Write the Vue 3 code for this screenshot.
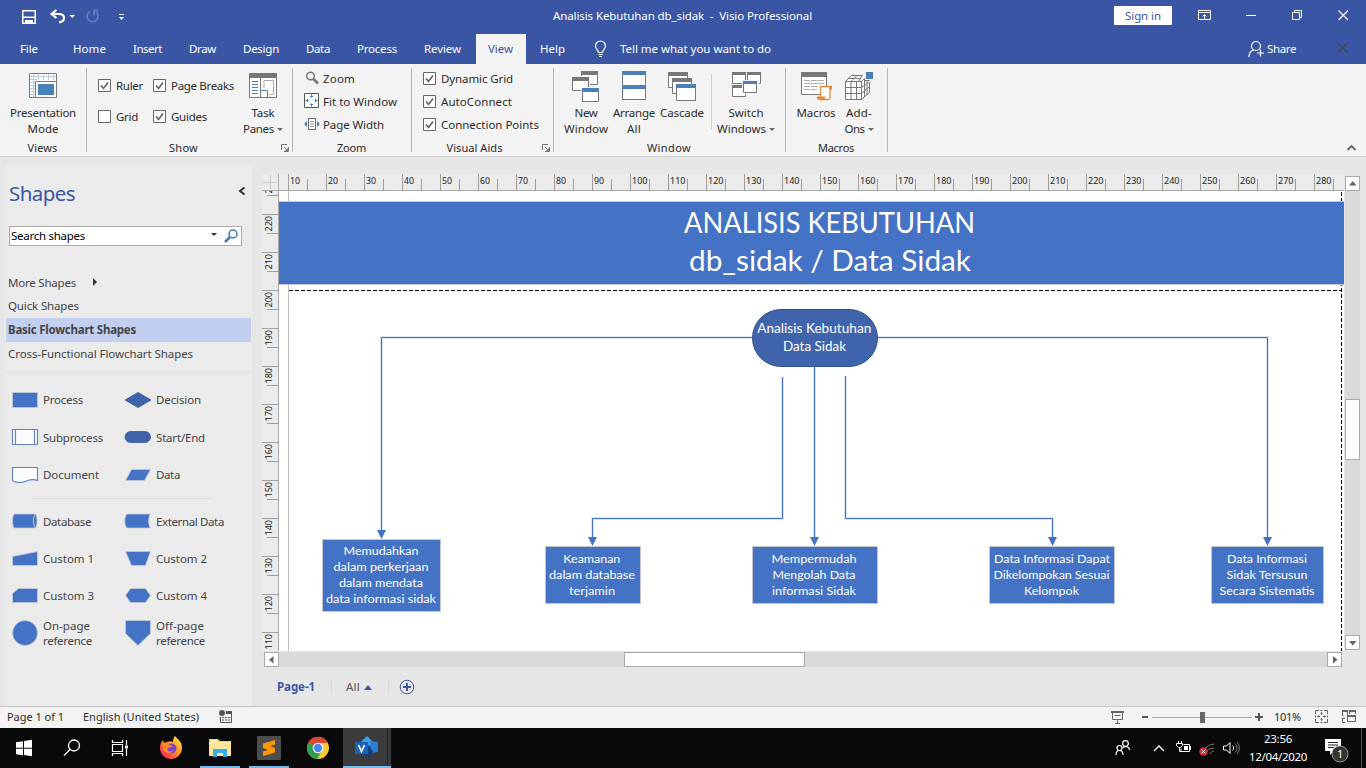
<script setup>
// Sets the tracking of a label so that its text spans the given width in pixels.
const vFit = {
  mounted(el, { value }) {
    const natural = el.getBoundingClientRect().width
    const count = el.textContent.length
    el.style.letterSpacing = ((value - natural) / count).toFixed(3) + 'px'
  }
}

const tabs = [
  ['File', 18], ['Home', 33], ['Insert', 29], ['Draw', 27], ['Design', 36],
  ['Data', 24], ['Process', 40], ['Review', 37], ['View', 25], ['Help', 25]
]

const showChecks = [
  ['Ruler', 27, true], ['Page Breaks', 63, true], ['Grid', 22, false], ['Guides', 36, true]
]
const aidChecks = [['Dynamic Grid', 72], ['AutoConnect', 71], ['Connection Points', 98]]

const stencilTop = [
  ['process', 'Process', 40], ['decision', 'Decision', 45],
  ['subprocess', 'Subprocess', 60], ['startend', 'Start/End', 49],
  ['document', 'Document', 56], ['data', 'Data', 24]
]
const stencilBottom = [
  ['database', 'Database', 48], ['external', 'External Data', 68],
  ['custom1', 'Custom 1', 51], ['custom2', 'Custom 2', 51],
  ['custom3', 'Custom 3', 51], ['custom4', 'Custom 4', 51]
]

const hTicks = Array.from({ length: 28 }, (_, i) => ({ x: 26 + i * 38, n: 10 + i * 10 }))
const vTicks = Array.from({ length: 13 }, (_, i) => ({ y: -15 + i * 38, n: 230 - i * 10 }))

const nodes = [
  { x: 43, y: 348, w: 118, h: 72, lines: [['Memudahkan', 75, 102], ['dalam perkerjaan', 95, 102], ['dalam mendata', 84, 102], ['data informasi sidak', 110, 102]] },
  { x: 266, y: 355, w: 95, h: 57, lines: [['Keamanan', 57, 312.8], ['dalam database', 86, 313], ['terjamin', 46, 313]] },
  { x: 473, y: 355, w: 125, h: 57, lines: [['Mempermudah', 85, 535], ['Mengolah Data', 83, 535], ['informasi Sidak', 84, 535]] },
  { x: 710, y: 355, w: 125, h: 57, lines: [['Data Informasi Dapat', 116, 773], ['Dikelompokan Sesuai', 116, 772.5], ['Kelompok', 55, 772.5]] },
  { x: 932, y: 355, w: 112, h: 57, lines: [['Data Informasi', 80, 988], ['Sidak Tersusun', 81, 988], ['Secara Sistematis', 95, 988]] }
]
const links = [
  'M473 146.5H102.5V340', 'M599 146.5H988.5V347', 'M535.5 176V347',
  'M503.5 186V327.5H313.5V347', 'M566.5 185V327.5H773.5V347'
]
const heads = [[102.5, 348], [988.5, 355], [535.5, 355], [313.5, 355], [773.5, 355]]
</script>

<template>
  <div class="app">
    <header class="titlebar">
      <svg class="quick" viewBox="0 0 170 32">
        <path d="M22 10h14v14H22zM23.500 11.500v5h11v-5zM23.500 18v4.500H25V20h8v2.500h1.500V18z" fill="#fff" fill-rule="evenodd" />
        <path d="M28 21h2.500v3H28z" fill="#fff" />
        <path d="M56.500 10l-5 4 5 4M52 14h6.500c3.500 0 5.500 1.500 5.500 4s-2 4-5 4.300" fill="none" stroke="#fff" stroke-width="2.200" />
        <path d="M69.500 15h5.500l-2.750 3z" fill="#fff" />
        <path d="M90 11.300a5.500 5.500 0 1 0 6.500 1M93 10.500h5.500M94 10.500v5" fill="none" stroke="#657bbb" stroke-width="1.800" />
        <path d="M119 14h5v1h-5zM119 17h5l-2.500 3z" fill="#fff" />
      </svg>
      <div class="doc-title"><span v-fit="259">Analisis Kebutuhan db_sidak&nbsp; -&nbsp; Visio Professional</span></div>
      <div class="signin"><span v-fit="36">Sign in</span></div>
      <svg class="winctl" viewBox="0 0 194 32" fill="none" stroke="#fff">
        <path d="M26.500 10.500h12v9h-12zM26.500 12.500h12M32.500 19v-4.500M30.500 16.500l2-2 2 2" />
        <path d="M74 15.500h10" />
        <path d="M120.500 12.500h7v7h-7zM122.500 12v-1.500h7v7H128" />
        <path d="M166.500 10.500l9.500 9.500M176 10.500l-9.500 9.500" stroke-width="1.100" />
      </svg>
    </header>

    <nav class="tabs">
      <div v-for="t in tabs" :key="t[0]" :class="['tab', { active: t[0] === 'View' }]"><span v-fit="t[1]">{{ t[0] }}</span></div>
      <svg class="bulb" viewBox="0 0 14 18" fill="none" stroke="#fff" stroke-width="1.200">
        <path d="M4.500 12.500c0-2.500-3-3.500-3-6.500a5 5 0 0 1 10 0c0 3-3 4-3 6.500zM4.500 14.500h4M5 16.500h3" />
      </svg>
      <span v-fit="151" class="tell">Tell me what you want to do</span>
      <div class="share">
        <svg viewBox="0 0 17 18" fill="none" stroke="#fff" stroke-width="1.200">
          <circle cx="8" cy="6" r="4.500" /><path d="M1 17c0-4 2-6.500 5-7M9 13h7M12.500 9.500v7" />
        </svg>
        <span v-fit="29">Share</span>
      </div>
      <svg class="docx" viewBox="0 0 12 12"><path d="M1 1l9.500 9.500M10.500 1L1 10.500" stroke="#444" stroke-width="1.200" /></svg>
    </nav>

    <section class="ribbon">
      <div class="group views">
        <div class="gbody">
          <div class="big">
            <svg viewBox="0 0 34 34"><path d="M3.500 5.500h27v24h-27z" fill="#fff" stroke="#7a7a7a" /><path d="M4 8.500h26M4 11.500h7M4 14.500h6M4 17.500h6M4 20.500h6M4 23.500h6M4 26.500h6M7.500 6v23M12.500 6v6M17.500 6v6M22.500 6v6M27.500 6v6" stroke="#b9cde3" /><path d="M9.500 13.500h21v16h-21z" fill="#fff" stroke="#7a7a7a" /><path d="M12 16h16v11H12z" fill="#4a80b8" /></svg>
            <span v-fit="66">Presentation</span><span v-fit="31">Mode</span>
          </div>
        </div>
        <div class="glabel"><span v-fit="30">Views</span></div>
      </div>
      <div class="group show">
        <div class="gbody">
          <div class="checks2">
            <label v-for="c in showChecks" :key="c[0]" class="check">
              <svg viewBox="0 0 13 13"><path d="M.5.5h12v12H.5z" fill="#fff" stroke="#666" /><path v-if="c[2]" d="M3 6.500l2.500 3L10 3.500" fill="none" stroke="#666" stroke-width="1.700" /></svg>
              <span v-fit="c[1]">{{ c[0] }}</span>
            </label>
          </div>
          <div class="big panes">
            <svg viewBox="0 0 34 34"><path d="M3.500 5.500h27v24h-27z" fill="#fff" stroke="#7a7a7a" /><path d="M3 5h28v5H3z" fill="#777" /><path d="M14.500 10v19" stroke="#7a7a7a" /><path d="M6 13.500h6M6 16.500h6M6 19.500h6M6 22.500h6M6 25.500h6" stroke="#4a80b8" /><path d="M18 20v-7.500h9.500v14H23" fill="none" stroke="#aaa" /><path d="M15 22.500h6.500V29" fill="none" stroke="#4a80b8" /></svg>
            <span v-fit="23">Task</span><div class="drop"><span v-fit="31">Panes</span><i></i></div>
          </div>
        </div>
        <div class="glabel"><span v-fit="29">Show</span></div>
        <svg class="launch" viewBox="0 0 8 8"><path d="M.5 6V.5H6M7.500 3v4.500H3M3 3l3 3" fill="none" stroke="#777" /><path d="M7 4v3H4z" fill="#777" /></svg>
      </div>
      <div class="group zoomg">
        <div class="gbody rows">
          <div class="row"><svg viewBox="0 0 16 16"><circle cx="6.500" cy="6" r="3.800" fill="none" stroke="#777" stroke-width="1.500" /><path d="M9.500 9l4.500 4.500" stroke="#777" stroke-width="2.500" /></svg><span v-fit="32">Zoom</span></div>
          <div class="row"><svg viewBox="0 0 16 16"><path d="M.5.5h14v14H.5z" fill="#fff" stroke="#555" /><path d="M7.500 1.500v3M7.500 10.500v3M1.500 7.500h3M10.500 7.500h3M6 3.500h3M6 11.500h3M3.500 6v3M11.500 6v3" stroke="#4a80b8" /></svg><span v-fit="74">Fit to Window</span></div>
          <div class="row"><svg viewBox="0 0 16 16"><path d="M4.500 2.500h7v11h-7z" fill="#fff" stroke="#666" /><path d="M6 5.500h4M6 8h4M6 10.500h4" stroke="#888" /><path d="M0 8l3-3v6zM16 8l-3-3v6z" fill="#4a80b8" /></svg><span v-fit="61">Page Width</span></div>
        </div>
        <div class="glabel"><span v-fit="29">Zoom</span></div>
      </div>
      <div class="group aids">
        <div class="gbody rows">
          <label v-for="c in aidChecks" :key="c[0]" class="check row">
            <svg viewBox="0 0 13 13"><path d="M.5.5h12v12H.5z" fill="#fff" stroke="#666" /><path d="M3 6.500l2.500 3L10 3.500" fill="none" stroke="#666" stroke-width="1.700" /></svg>
            <span v-fit="c[1]">{{ c[0] }}</span>
          </label>
        </div>
        <div class="glabel shift"><span v-fit="56">Visual Aids</span></div>
        <svg class="launch" viewBox="0 0 8 8"><path d="M.5 6V.5H6M7.500 3v4.500H3M3 3l3 3" fill="none" stroke="#777" /><path d="M7 4v3H4z" fill="#777" /></svg>
      </div>
      <div class="group windowg">
        <div class="gbody">
          <div class="big w48">
            <svg viewBox="0 0 34 34"><g fill="#fff" stroke="#777"><path d="M12.500 3.500h16v13h-16z" /></g><path d="M2 8h19v16H2z" fill="#f3f3f3" /><path d="M3.500 9.500h16v13h-16z" fill="#fff" stroke="#777" /><path d="M12 19h19v15H12z" fill="#f3f3f3" /><path d="M13.500 20.500h16v13h-16z" fill="#fff" stroke="#777" /><path d="M12 3h17v4H12zM3 9h17v4H3z" fill="#777" /><path d="M13 20h17v4H13z" fill="#4a80b8" /></svg>
            <span v-fit="23">New</span><span v-fit="44">Window</span>
          </div>
          <div class="big w48">
            <svg viewBox="0 0 34 34"><path d="M5.500 3.500h23v28h-23z" fill="#fff" stroke="#777" /><path d="M5 3h24v4H5zM5 17h24v4H5z" fill="#4a80b8" /></svg>
            <span v-fit="42">Arrange</span><span v-fit="14">All</span>
          </div>
          <div class="big w48">
            <svg viewBox="0 0 34 34"><g fill="#fff" stroke="#777"><path d="M3.500 4.500h19v15h-19z" /><path d="M7.500 10.500h19v15h-19z" /><path d="M11.500 16.500h19v16h-19z" /></g><path d="M3 4h20v4H3zM7 10h20v4H7z" fill="#777" /><path d="M11 16h20v4H11z" fill="#4a80b8" /></svg>
            <span v-fit="44">Cascade</span>
          </div>
          <div class="divider"></div>
          <div class="big w68">
            <svg viewBox="0 0 34 34"><g fill="#fff" stroke="#777"><path d="M3.500 4.500h13v11h-13zM18.500 4.500h13v11h-13zM3.500 17.500h13v11h-13z" /></g><path d="M3 4h14v3H3zM18 4h14v3H18zM3 17h14v3H3z" fill="#777" /><path d="M13 12h17v14H13z" fill="#f3f3f3" /><path d="M14.500 13.500h13v11h-13z" fill="#fff" stroke="#777" /><path d="M14 13h14v3H14z" fill="#4a80b8" /></svg>
            <span v-fit="35">Switch</span><div class="drop"><span v-fit="49">Windows</span><i></i></div>
          </div>
        </div>
        <div class="glabel"><span v-fit="44">Window</span></div>
      </div>
      <div class="group macros">
        <div class="gbody">
          <div class="big w48">
            <svg viewBox="0 0 34 34"><path d="M2.500 4.500h25v22h-25z" fill="#fff" stroke="#777" /><path d="M2 4h26v5H2z" fill="#777" /><path d="M5 12.500h6M12 12.500h6M19 12.500h6M5 15.500h6M12 15.500h6M19 15.500h6M5 18.500h6M12 18.500h6M5 21.500h6M12 21.500h6" stroke="#aaa" /><path d="M21.500 18.500h9.500V30c0 1-1 1.500-2 1.500h-9c2 0 1.500-2 1.500-3z" fill="#fff" stroke="#e8893a" stroke-width="1.300" /><path d="M18 28.500h8v3h-7c-1 0-1-1-1-3zM30 18h3v3.500h-2.500z" fill="#e8893a" /></svg>
            <span v-fit="39">Macros</span>
          </div>
          <div class="big w38">
            <svg viewBox="0 0 34 34"><path d="M3.500 13.500l6-6h17v17l-6 7h-17z" fill="#fff" /><path d="M3.500 13.500h16v18h-16zM3.500 19.500h16M3.500 25.500h16M9 13.500v18M14.500 13.500v18M3.500 13.500l6-6h11l-4 6M9 13.500l6-6M6 10.500h12M19.500 13.500l3-3v18l-3 3M22.500 12.500h5M19.500 19.500l8-5.500M19.500 25.500l8-7M19.500 31.500l8-7v-10M25 12.500V27" fill="none" stroke="#777" /><path d="M23 3h8v8h-8z" fill="#f3f3f3" /><path d="M24 4h7v7h-7z" fill="#4a80b8" /></svg>
            <span v-fit="26">Add-</span><div class="drop"><span v-fit="20">Ons</span><i></i></div>
          </div>
        </div>
        <div class="glabel"><span v-fit="36">Macros</span></div>
      </div>
      <svg class="collapse" viewBox="0 0 10 8"><path d="M1 6l4-4 4 4" fill="none" stroke="#666" stroke-width="1.800" /></svg>
    </section>

    <main class="work">
      <aside class="shapes">
        <div class="shead">
          <span v-fit="66">Shapes</span>
          <svg viewBox="0 0 8 10"><path d="M6.500 1.500L2 5l4.500 3.500" fill="none" stroke="#333" stroke-width="2" /></svg>
        </div>
        <div class="search">
          <span v-fit="74">Search shapes</span>
          <svg viewBox="0 0 32 18"><path d="M2 6h6L5 9z" fill="#333" /><circle cx="24" cy="7" r="4" fill="none" stroke="#3f78b8" stroke-width="1.500" /><path d="M21 10l-5 5" stroke="#3f78b8" stroke-width="2.500" /></svg>
        </div>
        <div class="cat more"><span v-fit="68">More Shapes</span><i></i></div>
        <div class="cat"><span v-fit="71">Quick Shapes</span></div>
        <div class="cat sel"><span v-fit="128">Basic Flowchart Shapes</span></div>
        <div class="cat"><span v-fit="185">Cross-Functional Flowchart Shapes</span></div>
        <div class="rule"></div>
        <div class="stencil top">
          <div v-for="s in stencilTop" :key="s[0]" class="item">
            <svg viewBox="0 0 28 24">
              <path v-if="s[0] === 'process'" d="M1.500 4.500h25v15h-25z" class="sh" />
              <path v-else-if="s[0] === 'decision'" d="M1 12l13-7.500L27 12l-13 7.500z" class="dk" />
              <g v-else-if="s[0] === 'subprocess'" class="ol"><path d="M1.500 4.500h25v15h-25z" /><path d="M4.500 4.500v15M23.500 4.500v15" /></g>
              <rect v-else-if="s[0] === 'startend'" x="1" y="6.500" width="25.500" height="11" rx="5.500" class="dk" />
              <path v-else-if="s[0] === 'document'" d="M1.500 4.500h25v13c-8-3-11 2-17 2-4 0-8-1-8-2z" class="ol" />
              <path v-else d="M1.500 17.500l6-11h19l-6 11z" class="sh" />
            </svg>
            <span v-fit="s[2]">{{ s[1] }}</span>
          </div>
        </div>
        <div class="rule short"></div>
        <div class="stencil">
          <div v-for="s in stencilBottom" :key="s[0]" class="item">
            <svg viewBox="0 0 28 24">
              <g v-if="s[0] === 'database'"><path d="M3 5h21.500c2 2 2 12 0 14H3c-2-3-2-11 0-14z" class="sh" /><path d="M24 5.500c-2 3-2 10 0 13" fill="none" stroke="#c5d3ec" /></g>
              <path v-else-if="s[0] === 'external'" d="M3 5h23.500c-2.500 3-2.500 11 0 14H3c-3-3-3-11 0-14z" class="sh" />
              <path v-else-if="s[0] === 'custom1'" d="M1.500 19.500v-9l25-5v14z" class="sh" />
              <path v-else-if="s[0] === 'custom2'" d="M1.500 5.500h25l-5 14h-14z" class="sh" />
              <path v-else-if="s[0] === 'custom3'" d="M1.500 19.500v-9l6-5h19v14z" class="sh" />
              <path v-else d="M1.500 12.500l5-7h15l5 7-5 7h-15z" class="sh" />
            </svg>
            <span v-fit="s[2]">{{ s[1] }}</span>
          </div>
          <div class="item tall">
            <svg viewBox="0 0 28 28"><circle cx="14" cy="14" r="12.500" class="sh" /></svg>
            <div><span v-fit="47">On-page</span><br /><span v-fit="49">reference</span></div>
          </div>
          <div class="item tall">
            <svg viewBox="0 0 28 28"><path d="M1.500 1.500h25v13L14 26.500l-12.500-12z" class="sh" /></svg>
            <div><span v-fit="48">Off-page</span><br /><span v-fit="49">reference</span></div>
          </div>
        </div>
      </aside>

      <section class="editor">
        <div class="sheet">
          <svg class="hruler" viewBox="0 0 1082 17">
            <path d="M1 8.500h14M8.500 1v14" stroke="#ccc" />
            <path d="M16.500 0v17M0 16.500h1082" stroke="#aaa" />
            <g v-for="t in hTicks" :key="t.n">
              <path :d="`M${t.x + .5} 0v17M${t.x + 19.5} 5v12`" stroke="#a0a0a0" />
              <text :x="t.x + 2" y="10.300" :textLength="t.n > 99 ? 15.500 : 10" lengthAdjust="spacingAndGlyphs">{{ t.n }}</text>
            </g>
          </svg>
          <svg class="vruler" viewBox="0 0 17 460">
            <path d="M16.500 0v460" stroke="#aaa" />
            <g v-for="t in vTicks" :key="t.n">
              <path :d="`M0 ${t.y + 38.5}h17M5 ${t.y + 19.5}h12`" stroke="#a0a0a0" />
              <text :transform="`translate(9.500 ${t.y + 17.5}) rotate(-90)`" textLength="15.500" lengthAdjust="spacingAndGlyphs">{{ t.n }}</text>
            </g>
          </svg>
          <svg class="canvas" viewBox="0 0 1065 460">
            <path d="M0 0h1065v460H0z" fill="#fff" />
            <path d="M9.500 0v460" stroke="#c0c0c0" />
            <path d="M10 99.500h1052M1062.500 1v459" stroke="#000" stroke-width="1" stroke-dasharray="4 2" />
            <path d="M0 10h1065v84H0z" fill="#c3c8d0" /><path d="M0 11h1065v82H0z" fill="#4472c4" />
            <g class="banner">
              <text x="550.500" y="42" textLength="291" lengthAdjust="spacingAndGlyphs">ANALISIS KEBUTUHAN</text>
              <text x="551" y="80" textLength="282" lengthAdjust="spacingAndGlyphs">db_sidak / Data Sidak</text>
            </g>
            <g fill="none">
              <path v-for="l in links" :key="'g' + l" :d="l" stroke="#dbe4f4" stroke-width="3" />
              <path v-for="l in links" :key="l" :d="l" stroke="#4472c4" stroke-width="1" />
            </g>
            <path v-for="h in heads" :key="h[0]" :d="`M${h[0] - 4.5} ${h[1] - 9}h9l-4.500 9z`" fill="#4472c4" />
            <rect x="473.500" y="118.500" width="125" height="57" rx="28.500" fill="#4064ac" stroke="#2f528f" />
            <g class="pill">
              <text x="535.300" y="142" textLength="114" lengthAdjust="spacingAndGlyphs">Analisis Kebutuhan</text>
              <text x="535.500" y="160" textLength="63" lengthAdjust="spacingAndGlyphs">Data Sidak</text>
            </g>
            <g v-for="n in nodes" :key="n.x" class="node">
              <rect :x="n.x + .5" :y="n.y + .5" :width="n.w" :height="n.h" fill="#4472c4" stroke="#c3c6cc" />
              <text v-for="(l, i) in n.lines" :key="l[0]" :x="l[2]" :y="n.y + 17 + i * 16 - (n.h > 60 ? 1 : 0)" :textLength="l[1]" lengthAdjust="spacingAndGlyphs">{{ l[0] }}</text>
            </g>
          </svg>
        </div>
        <div class="vscroll">
          <svg class="sbtn" viewBox="0 0 13 13"><path d="M3 8.500h7.500L6.750 4z" /></svg>
          <div class="vtrack"><div class="vthumb"></div></div>
          <svg class="sbtn" viewBox="0 0 13 13"><path d="M3 5h7.500L6.750 9.500z" /></svg>
        </div>
        <div class="hscroll">
          <svg class="sbtn" viewBox="0 0 13 13"><path d="M8.500 3v7.500L4 6.750z" /></svg>
          <div class="htrack"><div class="hthumb"></div></div>
          <svg class="sbtn" viewBox="0 0 13 13"><path d="M5 3v7.500l4.500-3.750z" /></svg>
        </div>
        <div class="pages">
          <b v-fit="38">Page-1</b><i class="psep"></i><span v-fit="14">All</span>
          <svg class="up" viewBox="0 0 8 5"><path d="M0 5h8L4 0z" fill="#3a56a4" /></svg><i class="psep"></i>
          <svg class="add" viewBox="0 0 16 16"><circle cx="8" cy="8" r="6.800" fill="none" stroke="#3a56a4" /><path d="M8 4v8M4 8h8" stroke="#3a56a4" stroke-width="2" /></svg>
        </div>
      </section>
    </main>

    <footer class="status">
      <span v-fit="57" class="pageno">Page 1 of 1</span>
      <span v-fit="116" class="lang">English (United States)</span>
      <svg class="rec" viewBox="0 0 14 14"><circle cx="3" cy="3" r="3" fill="#555" /><path d="M7 1h6v3H7z" fill="#555" /><path d="M1.500 7v5.500h11V3" fill="none" stroke="#555" /><path d="M3 7.500h2M6 7.500h2M9 7.500h2M3 10h2M6 10h2M9 10h2" stroke="#555" /></svg>
      <svg class="zoomer" viewBox="0 0 166 22"><path d="M11 4.500h13M12.500 5v7.500h10V5M14.500 8.500h6M17.500 13v3.500M15 16.500h5" fill="none" stroke="#666" /><path d="M11 4h13v2H11z" fill="#666" /><path d="M42 9h6v2h-6z" fill="#555" /><path d="M52 10.500h100" stroke="#aaa" /><path d="M100 5h5v11h-5z" fill="#666" /><path d="M155 9h8v2h-8zM158 6h2v8h-2z" fill="#555" /></svg>
      <span v-fit="27" class="pct">101%</span>
      <svg class="fitter" viewBox="0 0 44 16" fill="none" stroke="#666"><path d="M5 1.500H1.500V5M10 1.500h3.500V5M1.500 10v3.500H5M13.500 10v3.500H10M6.500 1.500h2M6.500 13.500h2M1.500 6.500v2M13.500 6.500v2" /><path d="M7.500 3v3M7.500 9v3M3 7.500h3M9 7.500h3M6.500 4.500h2M6.500 10.500h2M4.500 6.500v2M10.500 6.500v2" /><path d="M28.500 7V1.500h5V7M35.500 5V1.500h6V5M28 9.500h3M28.500 9v4.500h3M33.500 6.500h8v6h-8z" /><path d="M28 2h6M35 2h7M33 7h9" stroke-width="2" /></svg>
    </footer>

    <div class="taskbar">
      <div class="tb"><svg viewBox="0 0 24 24" fill="#fff"><path d="M4 6.200l7-1v6.500H4zM12 5l8-1.200v7.900h-8zM4 12.700h7v6.500l-7-1zM12 12.700h8v7.500L12 19z" /></svg></div>
      <div class="tb"><svg viewBox="0 0 24 24" fill="none" stroke="#fff" stroke-width="1.300"><circle cx="14" cy="9.500" r="5.500" /><path d="M10 13.500l-6 6" /></svg></div>
      <div class="tb tv"><svg viewBox="0 0 24 24" fill="none" stroke="#fff" stroke-width="1.200"><path d="M4.500 4v2.500h10V4M4.500 8.500h10v7h-10zM4.500 20v-2.500h10V20M18.500 4v5M18.500 13v7" /><path d="M17 9.500h3v3h-3z" fill="#fff" stroke="none" /></svg></div>
      <div class="tb wide"><svg viewBox="0 0 24 24"><defs><linearGradient id="fx" x1="1" y1="0" x2="0" y2="1"><stop offset="0" stop-color="#fff04a" /><stop offset=".45" stop-color="#ff9420" /><stop offset=".8" stop-color="#ff3750" /><stop offset="1" stop-color="#d8209c" /></linearGradient></defs><path d="M1 12c0-4 1-6 3-8l1 3 3-1c2-1 4-1 6 0 0-3 1-5 2-6 2 3 7 5 7 12a11 11 0 0 1-22 0z" fill="url(#fx)" /><circle cx="12.500" cy="12.500" r="5" fill="#7b43d4" /><path d="M3 7c3-1 5 0 7 2l4 1c-2 2-5 1-6 3 1 3 5 3 7 1-1 4-10 4-11-1z" fill="#ff8a1f" /></svg></div>
      <div class="tb wide run"><svg viewBox="0 0 24 24"><path d="M1 3h9l2 2h11v15H1z" fill="#f7cf66" /><path d="M1 6h22v14H1z" fill="#ffe69a" /><path d="M3 4h6v2H3z" fill="#fff3cf" /><path d="M5 13h14v8h-4v-4H9v4H5z" fill="#35aee8" /></svg></div>
      <div class="tb wide run"><svg viewBox="0 0 24 24"><rect width="24" height="24" rx="1" fill="#4d4d4d" /><path d="M6 7.500L18 4v4.500L13 10l5 2v4.500L6 20v-4.500l5-1.500-5-2z" fill="#ff9800" /></svg></div>
      <div class="tb chrome"><svg viewBox="0 0 24 24"><circle cx="12" cy="12" r="11" fill="#fbc934" /><path d="M12 12L2.500 6.500A11 11 0 0 0 11 23l5.500-9z" fill="#2e9e4f" /><path d="M12 12L2.500 6.500A11 11 0 0 1 22 7H12z" fill="#de4437" /><circle cx="12" cy="12" r="5.300" fill="#fff" /><circle cx="12" cy="12" r="4.200" fill="#4a88ee" /></svg></div>
      <div class="tb wide active"><svg viewBox="0 0 24 24"><path d="M12 0l6 6-6 6-6-6z" fill="#3aa0e8" /><path d="M15 5l8 1v10l-8 1z" fill="#2b7cd3" /><path d="M13 9l5 6.500-5 6.500-6-6z" fill="#123b80" /><path d="M0 6h13v12H0z" fill="#1b62b9" /><path d="M3.500 9l3 6.500 3-6.500" fill="none" stroke="#fff" stroke-width="1.700" /></svg></div>
      <svg class="tray" viewBox="0 0 130 40" fill="none" stroke="#fff">
        <g stroke-width="1.200"><circle cx="9.500" cy="20" r="2.500" /><path d="M6 27c0-6 7-6 7 0" /><circle cx="15.500" cy="15.500" r="2.800" /><path d="M12.500 20c2-2.500 7-1.500 7 2" /></g>
        <path d="M44 23l5-5 5 5" stroke-width="1.300" />
        <path d="M73.500 16.500h6v7H71v-3M80.500 18v4M68.500 13v3M71.500 13v3M66.500 15.500h6v2l-2 2h-2l-2-2zM69.500 19v4.500h2" /><path d="M74 18h4v4h-4z" fill="#fff" stroke="none" />
        <path d="M93 25a12 12 0 0 1 11-9M96 26a8 8 0 0 1 8-6M100 26a5 5 0 0 1 4-3" stroke="#777" /><circle cx="93.500" cy="23.500" r="4.300" fill="#dc2832" stroke="none" /><path d="M91.500 21.500l4 4M95.500 21.500l-4 4" />
        <path d="M113.500 18v4h3l3.500 3.500v-11L116.500 18z" /><path d="M122.500 17.500c1.500 1.500 1.500 3.500 0 5" /><path d="M125 15.500c2.500 2.500 2.500 7 0 9M127 14c3 3 3 9 0 12" stroke="#888" />
      </svg>
      <div class="clock"><span v-fit="28">23:56</span><span v-fit="58">12/04/2020</span></div>
      <div class="note">
        <svg viewBox="0 0 24 26"><path d="M0 1h16v12h-7l-4 4v-4H0z" fill="#fff" /><path d="M3 4.500h10M3 7h10M3 9.500h6" stroke="#222" /><circle cx="15" cy="16" r="8" fill="#333" stroke="#999" /></svg>
        <span>1</span>
      </div>
      <div class="peek"></div>
    </div>
  </div>
</template>

<style>
body { margin: 0; overflow: hidden; }
</style>
<style scoped>
.app { width: 1366px; height: 768px; overflow: hidden; display: flex; flex-direction: column; background: #e6e6e6; font-family: "Noto Sans", "Open Sans", sans-serif; font-size: 11.5px; color: #2b2b2b; }
.app * { box-sizing: border-box; }
span, b { white-space: nowrap; display: inline-block; }
svg { display: block; flex: none; }
.titlebar { height: 32px; background: #3955a3; display: flex; align-items: center; color: #fff; }
.quick { width: 170px; height: 32px; }
.doc-title { margin-left: 383px; width: 561px; padding-bottom: 2px; }
.signin { width: 58px; height: 19px; margin-bottom: 1px; background: #fff; color: #3955a3; display: flex; align-items: center; justify-content: center; border-radius: 1px; padding-bottom: 1px; }
.winctl { width: 194px; height: 32px; }
.tabs { height: 32px; padding-top: 2px; background: #3955a3; color: #fff; display: grid; grid-template-columns: 53px 60px 56px 54px 63px 51px 67px 64px 52px 67px 25px 628px 87px 12px; padding-left: 8px; align-items: center; }
.tab { padding: 0 0 2px 12px; height: 30px; display: flex; align-items: center; }
.tab.active { background: #f3f3f3; color: #3955a3; width: 50px; }
.bulb { width: 14px; height: 18px; margin-left: -1px; }
.tell { justify-self: start; margin-bottom: 2px; }
.share { display: flex; align-items: center; gap: 2px; padding-bottom: 2px; }
.share svg { width: 17px; height: 18px; margin-top: 2px; }
.docx { width: 12px; height: 12px; margin: 0 0 2px 2px; }
.ribbon { height: 93px; background: #f3f3f3; border-bottom: 1px solid #cfcfcf; display: flex; position: relative; }
.group { position: relative; height: 92px; display: flex; flex-direction: column; }
.group::after { content: ""; position: absolute; right: 0; top: 4px; height: 84px; width: 1px; background: #b5b5b5; }
.views { width: 87px; } .show { width: 206px; } .zoomg { width: 119px; } .aids { width: 142px; } .windowg { width: 232px; } .macros { width: 102px; }
.gbody { height: 76px; display: flex; }
.glabel { height: 16px; line-height: 16px; text-align: center; font-size: 11px; padding-right: 2px; }
.show .glabel { padding-right: 13px; }
.glabel.shift { padding-right: 17px; }
.launch { position: absolute; right: 4px; bottom: 4px; width: 8px; height: 8px; }
.big { display: flex; flex-direction: column; align-items: center; line-height: 16px; padding-top: 4px; }
.big > svg { width: 34px; height: 34px; margin-bottom: 3px; }
.big > span, .drop { height: 16px; }
.views .big { width: 86px; }
.panes { width: 60px; margin-left: 3px; }
.show .checks2 { width: 143px; padding: 6px 0 0 11px; display: grid; grid-template-columns: 55px 77px; grid-template-rows: 31px 31px; }
.check { display: flex; align-items: center; gap: 5px; }
.check svg { width: 13px; height: 13px; }
.rows { flex-direction: column; padding: 3px 0 0 11px; }
.row { height: 23px; display: flex; align-items: center; gap: 3px; }
.row.check { gap: 5px; }
.row.check svg { margin-bottom: 1px; }
.zoomg .row svg { width: 16px; height: 16px; margin-bottom: 1px; }
.drop { display: flex; align-items: center; gap: 3px; }
.drop i { border: 3px solid transparent; border-top-color: #666; border-bottom: 0; }
.w48 { width: 48px; } .w68 { width: 68px; } .w38 { width: 38px; }
.windowg .gbody { padding-left: 8px; }
.macros .gbody { padding-left: 6px; }
.divider { width: 1px; height: 55px; background: #d0d0d0; margin: 10px 0 0 5px; }
.collapse { position: absolute; right: 9px; top: 80px; width: 11px; height: 8px; }
.work { height: 549px; display: flex; }
.shapes { width: 247px; height: 542px; margin: 7px 0 0 5px; background: #ebebeb; color: #444; }
.shead { height: 60px; display: flex; align-items: center; justify-content: space-between; padding: 0 6px 2px 4px; color: #3a56a4; font-size: 20.5px; }
.shead svg { width: 8px; height: 10px; margin-top: -5px; }
.search { width: 233px; height: 20px; margin: 2px 0 0 4px; border: 1px solid #aaa; background: #fff; color: #000; display: flex; align-items: center; justify-content: space-between; padding-left: 1px; }
.search span { margin-bottom: 2px; }
.search svg { width: 32px; height: 18px; }
.cat { height: 24px; display: flex; align-items: center; padding: 0 0 2px 2px; margin: 0 1px; }
.cat.more { margin-top: 25px; height: 24px; }
.cat.more i { border: 4px solid transparent; border-left-color: #333; border-right: 0; margin-left: 17px; }
.cat.more + .cat { height: 23px; }
.cat.sel { background: #c3cff1; font-weight: bold; }
.rule { height: 1px; background: #dcdcdc; margin: 6px 1px 0; }
.rule.short { margin: 4px 41px 0 27px; }
.stencil { display: grid; grid-template-columns: 113px 120px; grid-auto-rows: 37px; padding: 4px 0 0 6px; }
.stencil.top { padding-top: 8px; grid-auto-rows: 37.6px; }
.item { display: flex; align-items: center; gap: 4px; }
.item svg { width: 28px; height: 24px; }
.item.tall svg { height: 28px; }
.item.tall { line-height: 15px; height: 38px; }
.sh { fill: #4472c4; stroke: #c5cad5; stroke-width: .8; }
.dk { fill: #4064ac; stroke: #34599d; stroke-width: .8; }
.ol { fill: #fbfcff; stroke: #6485c4; stroke-width: 1.200; }
.editor { margin: 17px 6px 0 10px; width: 1098px; height: 532px; display: grid; grid-template-columns: 1083px 15px; grid-template-rows: 478px 16px 38px; }
.sheet { display: grid; grid-template-columns: 17px 1065px; grid-template-rows: 17px 460px; }
.hruler { grid-column: 1 / 3; width: 1082px; height: 17px; background: #ebebeb; }
.vruler { width: 17px; height: 460px; background: #ebebeb; }
.canvas { width: 1065px; height: 460px; }
.hruler text, .vruler text { font: 9.5px "Noto Sans", sans-serif; fill: #222; }
.canvas text { font-family: Lato, sans-serif; fill: #fff; text-anchor: middle; }
.canvas .banner text { font-size: 28.5px; }
.canvas .pill text { font-size: 13px; }
.canvas .node text { font-size: 11.5px; }
.vscroll { padding-top: 2px; display: flex; flex-direction: column; height: 476px; }
.sbtn { width: 15px; height: 15px; background: #fff; border: 1px solid #aaa; fill: #666; }
.vtrack { flex: 1; background: #dadada; }
.vthumb { height: 61px; margin-top: 208px; background: #fff; border: 1px solid #aaa; }
.hscroll { padding-left: 2px; width: 1080px; display: flex; align-items: flex-start; }
.htrack { flex: 1; height: 15px; background: #dadada; }
.hthumb { width: 181px; height: 15px; margin: 0 0 0 345px; background: #fff; border: 1px solid #aaa; }
.pages { grid-column: 1 / 3; display: flex; align-items: center; padding: 0 0 1px 15px; color: #555; }
.pages b { color: #3a56a4; margin-bottom: 1px; }
.psep { width: 1px; height: 15px; background: #d9d9d9; margin-left: 16px; }
.pages span { margin: 0 0 1px 14px; }
.up { width: 8px; height: 5px; margin: 2px 0 0 4px; }
.add { width: 16px; height: 16px; margin-left: 10px; }
.status { height: 22px; background: #f3f3f3; border-top: 1px solid #c6c6c6; display: flex; align-items: center; font-size: 11px; padding-bottom: 1px; }
.pageno { margin-left: 7px; } .lang { margin-left: 19px; }
.pageno, .lang, .pct { padding-bottom: 1px; }
.rec { width: 14px; height: 14px; margin-left: 20px; }
.zoomer { width: 166px; height: 22px; margin: 1px 0 0 867px; }
.pct { margin-left: 8px; }
.fitter { width: 44px; height: 16px; margin-left: 13px; }
.taskbar { height: 40px; background: #090909; color: #fff; display: flex; }
.tb { width: 48px; height: 40px; display: flex; align-items: center; justify-content: center; }
.tb svg { width: 24px; height: 24px; }
.tb.tv { width: 50px; padding-right: 2px; }
.tb.wide { width: 49px; }
.tb.chrome { width: 50px; }
.run { background: linear-gradient(#76b9ed, #76b9ed) 50% 100% / 40px 2px no-repeat; }
.active { padding-right: 2px; background: linear-gradient(#76b9ed, #76b9ed) 0 100% / 48px 2px no-repeat, linear-gradient(90deg, #3b3b3b 44px, #222 44px, #222 45px, #3b3b3b 45px, #3b3b3b 48px, #090909 48px); }
.tray { width: 130px; height: 40px; margin-left: 718px; }
.clock { width: 58px; margin-left: 9px; display: flex; flex-direction: column; align-items: center; line-height: 18px; padding-top: 2px; font-size: 11.5px; }
.note { position: relative; margin: 10px 0 0 18px; width: 36px; height: 30px; }
.note svg { width: 24px; height: 26px; }
.note span { position: absolute; left: 12px; top: 8px; font-size: 11px; line-height: 16px; }
.peek { width: 1px; height: 40px; background: #555; }
</style>
